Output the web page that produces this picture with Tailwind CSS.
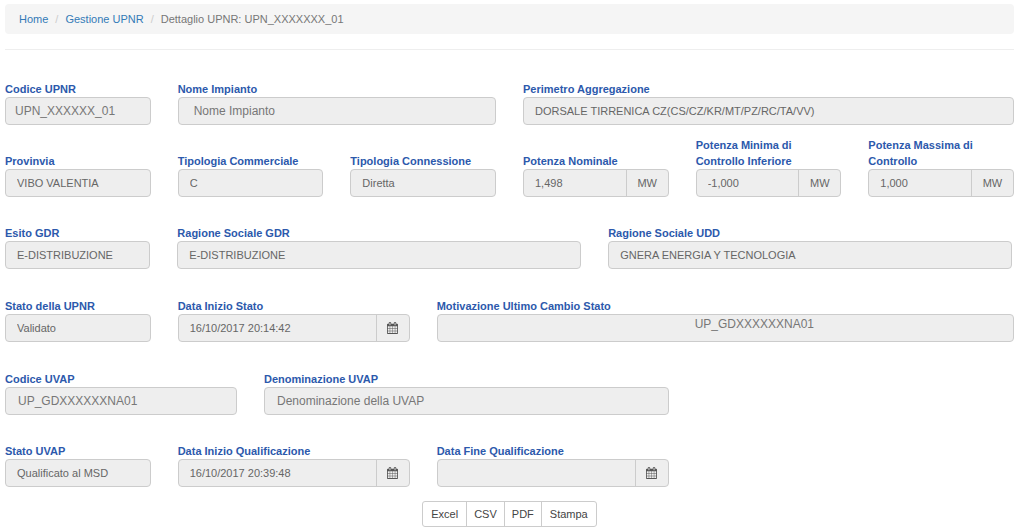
<!DOCTYPE html>
<html lang="it">
<head>
<meta charset="utf-8">
<title>Dettaglio UPNR</title>
<script src="https://cdn.jsdelivr.net/npm/@tailwindcss/browser@4"></script>
</head>
<body class="bg-white pt-1 pr-[10px] pl-[5px] font-['Liberation_Sans',Arial,sans-serif] text-[11px] text-[#666]">
<svg class="hidden">
  <symbol id="calendar" viewBox="0 0 1664 1792"><path d="M128 1664h288v-288h-288v288zm352 0h320v-288h-320v288zm-352-352h288v-320h-288v320zm352 0h320v-320h-320v320zm-352-384h288v-288h-288v288zm736 736h320v-288h-320v288zm-384-736h320v-288h-320v288zm768 736h288v-288h-288v288zm-384-352h320v-320h-320v320zm-352-864v-288q0-13-9.5-22.5t-22.5-9.5h-64q-13 0-22.5 9.5t-9.5 22.5v288q0 13 9.5 22.5t22.5 9.5h64q13 0 22.5-9.5t9.5-22.5zm736 864h288v-320h-288v320zm-384-384h320v-288h-320v288zm384 0h288v-288h-288v288zm32-480v-288q0-13-9.5-22.5t-22.5-9.5h-64q-13 0-22.5 9.5t-9.5 22.5v288q0 13 9.5 22.5t22.5 9.5h64q13 0 22.5-9.5t9.5-22.5zm384-64v1280q0 52-38 90t-90 38h-1408q-52 0-90-38t-38-90v-1280q0-52 38-90t90-38h128v-96q0-66 47-113t113-47h64q66 0 113 47t47 113v96h384v-96q0-66 47-113t113-47h64q66 0 113 47t47 113v96h128q52 0 90 38t38 90z"/></symbol>
</svg>
<nav aria-label="Breadcrumb">
  <ol class="flex h-[30px] items-center rounded bg-[#f5f5f5] px-[14px] text-[#777]">
    <li><a href="#" class="text-[#337ab7]">Home</a></li>
    <li class="px-[7px] text-[#ccc]" aria-hidden="true">/</li>
    <li><a href="#" class="text-[#337ab7]">Gestione UPNR</a></li>
    <li class="px-[7px] text-[#ccc]" aria-hidden="true">/</li>
    <li aria-current="page">Dettaglio UPNR: UPN_XXXXXXX_01</li>
  </ol>
</nav>
<hr class="mt-[15px] border-[#eee]">
<form>
  <div class="mt-[31px] grid grid-cols-12 items-end gap-x-[27px]">
    <div class="col-span-2">
      <label for="codice" class="block leading-4 font-bold text-[#2c59ac]">Codice UPNR</label>
      <input id="codice" readonly value="UPN_XXXXXX_01" class="block h-7 w-full rounded border border-[#ccc] bg-[#eee] px-[9px] text-xs text-[#777]">
    </div>
    <div class="col-span-4">
      <label for="nome" class="block leading-4 font-bold text-[#2c59ac]">Nome Impianto</label>
      <input id="nome" readonly value="Nome Impianto" class="block h-7 w-full rounded border border-[#ccc] bg-[#eee] px-[15px] text-xs text-[#777]">
    </div>
    <div class="col-span-6">
      <label for="perimetro" class="block leading-4 font-bold text-[#2c59ac]">Perimetro Aggregazione</label>
      <input id="perimetro" readonly value="DORSALE TIRRENICA CZ(CS/CZ/KR/MT/PZ/RC/TA/VV)" class="block h-7 w-full rounded border border-[#ccc] bg-[#eee] px-[11px]">
    </div>
  </div>

  <div class="mt-3 grid grid-cols-12 items-end gap-x-[27px]">
    <div class="col-span-2">
      <label for="provincia" class="block leading-4 font-bold text-[#2c59ac]">Provinvia</label>
      <input id="provincia" readonly value="VIBO VALENTIA" class="block h-7 w-full rounded border border-[#ccc] bg-[#eee] px-[11px]">
    </div>
    <div class="col-span-2">
      <label for="commerciale" class="block leading-4 font-bold text-[#2c59ac]">Tipologia Commerciale</label>
      <input id="commerciale" readonly value="C" class="block h-7 w-full rounded border border-[#ccc] bg-[#eee] px-[11px]">
    </div>
    <div class="col-span-2">
      <label for="connessione" class="block leading-4 font-bold text-[#2c59ac]">Tipologia Connessione</label>
      <input id="connessione" readonly value="Diretta" class="block h-7 w-full rounded border border-[#ccc] bg-[#eee] px-[11px]">
    </div>
    <div class="col-span-2">
      <label for="nominale" class="block leading-4 font-bold text-[#2c59ac]">Potenza Nominale</label>
      <div class="flex h-7 rounded border border-[#ccc] bg-[#eee]">
        <input id="nominale" readonly value="1,498" class="min-w-0 flex-1 px-[11px]">
        <span class="flex w-[42px] items-center justify-center border-l border-[#ccc]">MW</span>
      </div>
    </div>
    <div class="col-span-2">
      <label for="minima" class="block leading-4 font-bold text-[#2c59ac]">Potenza Minima di<br>Controllo Inferiore</label>
      <div class="flex h-7 rounded border border-[#ccc] bg-[#eee]">
        <input id="minima" readonly value="-1,000" class="min-w-0 flex-1 px-[11px]">
        <span class="flex w-[42px] items-center justify-center border-l border-[#ccc]">MW</span>
      </div>
    </div>
    <div class="col-span-2">
      <label for="massima" class="block leading-4 font-bold text-[#2c59ac]">Potenza Massima di<br>Controllo</label>
      <div class="flex h-7 rounded border border-[#ccc] bg-[#eee]">
        <input id="massima" readonly value="1,000" class="min-w-0 flex-1 px-[11px]">
        <span class="flex w-[42px] items-center justify-center border-l border-[#ccc]">MW</span>
      </div>
    </div>
  </div>

  <div class="mt-7 mr-0.5 grid grid-cols-12 items-end gap-x-[27px]">
    <div class="col-span-2">
      <label for="esito" class="block leading-4 font-bold text-[#2c59ac]">Esito GDR</label>
      <input id="esito" readonly value="E-DISTRIBUZIONE" class="block h-7 w-full rounded border border-[#ccc] bg-[#eee] px-[11px]">
    </div>
    <div class="col-span-5">
      <label for="gdr" class="block leading-4 font-bold text-[#2c59ac]">Ragione Sociale GDR</label>
      <input id="gdr" readonly value="E-DISTRIBUZIONE" class="block h-7 w-full rounded border border-[#ccc] bg-[#eee] px-[11px]">
    </div>
    <div class="col-span-5">
      <label for="udd" class="block leading-4 font-bold text-[#2c59ac]">Ragione Sociale UDD</label>
      <input id="udd" readonly value="GNERA ENERGIA Y TECNOLOGIA" class="block h-7 w-full rounded border border-[#ccc] bg-[#eee] px-[11px]">
    </div>
  </div>

  <div class="mt-[29px] grid grid-cols-12 items-end gap-x-[27px]">
    <div class="col-span-2">
      <label for="stato" class="block leading-4 font-bold text-[#2c59ac]">Stato della UPNR</label>
      <input id="stato" readonly value="Validato" class="block h-7 w-full rounded border border-[#ccc] bg-[#eee] px-[11px]">
    </div>
    <div class="col-span-3">
      <label for="inizio-stato" class="block leading-4 font-bold text-[#2c59ac]">Data Inizio Stato</label>
      <div class="flex h-7 rounded border border-[#ccc] bg-[#eee]">
        <input id="inizio-stato" readonly value="16/10/2017 20:14:42" class="min-w-0 flex-1 px-[11px]">
        <button type="button" aria-label="Apri calendario" class="flex w-[33px] items-center justify-center border-l border-[#ccc] text-[#555]"><svg class="h-3 w-[11px] fill-current"><use href="#calendar"/></svg></button>
      </div>
    </div>
    <div class="col-span-7">
      <label for="motivazione" class="block leading-4 font-bold text-[#2c59ac]">Motivazione Ultimo Cambio Stato</label>
      <input id="motivazione" readonly value="UP_GDXXXXXXNA01" class="block h-7 w-full rounded border border-[#ccc] bg-[#eee] pb-2 pl-[58px] text-center text-xs text-[#777]">
    </div>
  </div>

  <div class="mt-[29px] grid grid-cols-12 items-end gap-x-[27px]">
    <div class="col-span-3">
      <label for="codice-uvap" class="block leading-4 font-bold text-[#2c59ac]">Codice UVAP</label>
      <input id="codice-uvap" readonly value="UP_GDXXXXXXNA01" class="block h-7 w-full rounded border border-[#ccc] bg-[#eee] px-3 text-xs text-[#777]">
    </div>
    <div class="col-span-5">
      <label for="denominazione" class="block leading-4 font-bold text-[#2c59ac]">Denominazione UVAP</label>
      <input id="denominazione" readonly value="Denominazione della UVAP" class="block h-7 w-full rounded border border-[#ccc] bg-[#eee] px-3 text-xs text-[#777]">
    </div>
  </div>

  <div class="mt-7 grid grid-cols-12 items-end gap-x-[27px]">
    <div class="col-span-2">
      <label for="stato-uvap" class="block leading-4 font-bold text-[#2c59ac]">Stato UVAP</label>
      <input id="stato-uvap" readonly value="Qualificato al MSD" class="block h-7 w-full rounded border border-[#ccc] bg-[#eee] px-[11px]">
    </div>
    <div class="col-span-3">
      <label for="inizio-qualifica" class="block leading-4 font-bold text-[#2c59ac]">Data Inizio Qualificazione</label>
      <div class="flex h-7 rounded border border-[#ccc] bg-[#eee]">
        <input id="inizio-qualifica" readonly value="16/10/2017 20:39:48" class="min-w-0 flex-1 px-[11px]">
        <button type="button" aria-label="Apri calendario" class="flex w-[33px] items-center justify-center border-l border-[#ccc] text-[#555]"><svg class="h-3 w-[11px] fill-current"><use href="#calendar"/></svg></button>
      </div>
    </div>
    <div class="col-span-3">
      <label for="fine-qualifica" class="block leading-4 font-bold text-[#2c59ac]">Data Fine Qualificazione</label>
      <div class="flex h-7 rounded border border-[#ccc] bg-[#eee]">
        <input id="fine-qualifica" readonly value="" class="min-w-0 flex-1 px-[11px]">
        <button type="button" aria-label="Apri calendario" class="flex w-[33px] items-center justify-center border-l border-[#ccc] text-[#555]"><svg class="h-3 w-[11px] fill-current"><use href="#calendar"/></svg></button>
      </div>
    </div>
  </div>

  <div class="mt-[14px] flex justify-center">
    <div class="flex h-[26px] divide-x divide-[#ccc] rounded-[3px] border border-[#ccc] text-[#444]">
      <button type="button" class="px-2">Excel</button>
      <button type="button" class="px-[7px]">CSV</button>
      <button type="button" class="px-[7px]">PDF</button>
      <button type="button" class="px-2">Stampa</button>
    </div>
  </div>
</form>
</body>
</html>
